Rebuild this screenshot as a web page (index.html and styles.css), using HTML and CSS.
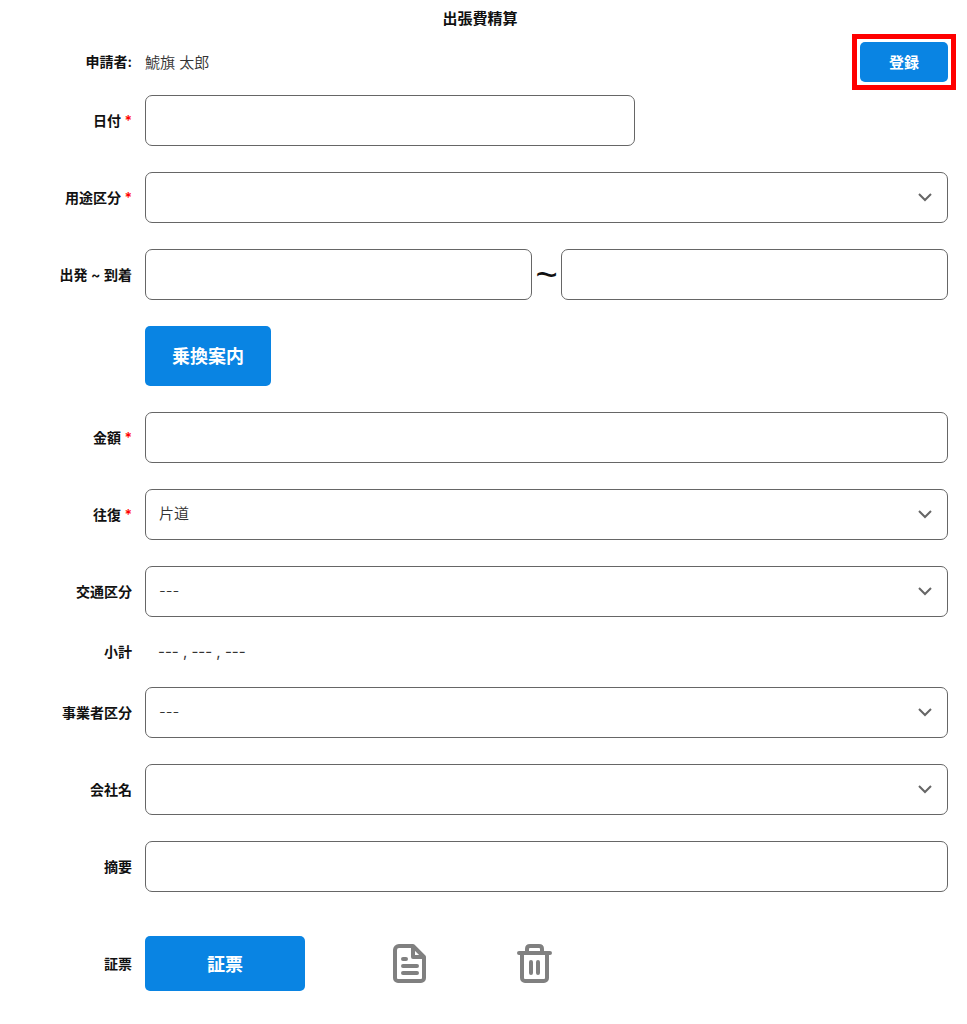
FILE: index.html
```html
<!DOCTYPE html>
<html lang="ja">
<head>
<meta charset="utf-8">
<meta name="viewport" content="width=device-width, initial-scale=1">
<title>出張費精算</title>
<link rel="stylesheet" href="styles.css">
</head>
<body>
<form class="expense">
  <h1 class="title">出張費精算</h1>
  <div class="row head">
    <span class="label">申請者:</span>
    <div class="head-body">
      <span class="name">鯱旗 太郎</span>
      <button class="button register" type="button">登録</button>
    </div>
  </div>
  <div class="row">
    <label class="label" for="date">日付 <span class="required">*</span></label>
    <input class="field date" id="date" type="text">
  </div>
  <div class="row">
    <label class="label" for="usage">用途区分 <span class="required">*</span></label>
    <div class="select">
      <select class="field" id="usage"><option></option></select>
      <svg class="chevron" viewBox="0 0 16 16" aria-hidden="true"><path d="M2 5l6 6 6-6"/></svg>
    </div>
  </div>
  <div class="row">
    <label class="label" for="from">出発 ~ 到着</label>
    <div class="range">
      <input class="field" id="from" type="text">
      <span class="tilde">~</span>
      <input class="field" id="to" type="text" aria-label="到着">
    </div>
  </div>
  <div class="row">
    <span></span>
    <button class="button transfer" type="button">乗換案内</button>
  </div>
  <div class="row">
    <label class="label" for="amount">金額 <span class="required">*</span></label>
    <input class="field" id="amount" type="text">
  </div>
  <div class="row">
    <label class="label" for="trip">往復 <span class="required">*</span></label>
    <div class="select">
      <select class="field" id="trip"><option>片道</option></select>
      <svg class="chevron" viewBox="0 0 16 16" aria-hidden="true"><path d="M2 5l6 6 6-6"/></svg>
    </div>
  </div>
  <div class="row">
    <label class="label" for="transport">交通区分</label>
    <div class="select">
      <select class="field" id="transport"><option>---</option></select>
      <svg class="chevron" viewBox="0 0 16 16" aria-hidden="true"><path d="M2 5l6 6 6-6"/></svg>
    </div>
  </div>
  <div class="row">
    <span class="label">小計</span>
    <span class="subtotal">--- , --- , ---</span>
  </div>
  <div class="row">
    <label class="label" for="operator">事業者区分</label>
    <div class="select">
      <select class="field" id="operator"><option>---</option></select>
      <svg class="chevron" viewBox="0 0 16 16" aria-hidden="true"><path d="M2 5l6 6 6-6"/></svg>
    </div>
  </div>
  <div class="row">
    <label class="label" for="company">会社名</label>
    <div class="select">
      <select class="field" id="company"><option></option></select>
      <svg class="chevron" viewBox="0 0 16 16" aria-hidden="true"><path d="M2 5l6 6 6-6"/></svg>
    </div>
  </div>
  <div class="row">
    <label class="label" for="summary">摘要</label>
    <input class="field" id="summary" type="text">
  </div>
  <div class="row voucher-row">
    <span class="label">証票</span>
    <div class="voucher-body">
      <button class="button voucher" type="button">証票</button>
      <button class="icon-button" type="button" aria-label="書類">
        <svg class="icon" viewBox="0 0 40 40" aria-hidden="true">
          <path d="M23 2H9a4 4 0 0 0-4 4v28a3 3 0 0 0 3 3h23a3 3 0 0 0 3-3V13L23 2zM23 2v11h11M13 15h3M13 22h14M13 29h14"/>
        </svg>
      </button>
      <button class="icon-button" type="button" aria-label="削除">
        <svg class="icon" viewBox="0 0 40 40" aria-hidden="true">
          <path d="M4 9h31M12 9V5Q12 2 15 2h9q3 0 3 3V9M7 10v24a3 3 0 0 0 3 3h19a3 3 0 0 0 3-3V10M16 18v11M23 18v11"/>
        </svg>
      </button>
    </div>
  </div>
</form>
</body>
</html>
```
FILE: styles.css
```css
* {
  box-sizing: border-box;
}

body {
  margin: 0;
  background: #fff;
  color: #111;
  font-family: Inter, "Noto Sans CJK JP", sans-serif;
}

.expense {
  display: flex;
  flex-direction: column;
  gap: 26px;
  padding: 8px 19px 32px 0;
}

.title {
  margin: 0 0 -18px 12px;
  font-size: 15px;
  line-height: 22px;
  font-weight: 600;
  text-align: center;
}

.row {
  display: grid;
  grid-template-columns: 132px minmax(0, 1fr);
  column-gap: 13px;
  align-items: center;
}

.head {
  margin: 4px 0 -13px;
}

.head-body {
  display: flex;
  align-items: center;
  justify-content: space-between;
}

.name {
  padding-bottom: 2px;
  color: #333;
  font-size: 15px;
  font-weight: 350;
}

.label {
  font-size: 14px;
  line-height: 18px;
  font-weight: 600;
  text-align: right;
}

.required {
  color: #f00;
}

.field {
  display: block;
  width: 100%;
  height: 51px;
  padding: 0 13px 2px;
  border: 1px solid #666;
  border-radius: 7px;
  background: #fff;
  color: #333;
  font-family: inherit;
  font-size: 15px;
  font-weight: 350;
  appearance: none;
}

.date {
  width: 61%;
}

.select {
  position: relative;
}

.chevron {
  position: absolute;
  top: 50%;
  right: 15px;
  width: 16px;
  height: 16px;
  margin-top: -9px;
  fill: none;
  stroke: #666;
  stroke-width: 2;
  pointer-events: none;
}

.range {
  display: grid;
  grid-template-columns: minmax(0, 1fr) 29px minmax(0, 1fr);
  align-items: center;
}

.tilde {
  font-family: "Liberation Sans", sans-serif;
  font-size: 38px;
  line-height: 40px;
  text-align: center;
}

.button {
  padding: 0 0 2px;
  border: 0;
  border-radius: 5px;
  background: #0984e3;
  color: #fff;
  font-family: inherit;
  font-size: 18px;
  font-weight: 600;
}

.register {
  position: relative;
  width: 88px;
  height: 40px;
  font-size: 15px;
}

.register::after {
  content: "";
  position: absolute;
  inset: -8px;
  border: 5px solid #f00;
}

.transfer {
  width: 126px;
  height: 60px;
}

.subtotal {
  padding-left: 13px;
  color: #333;
  font-size: 15px;
  line-height: 18px;
  font-weight: 400;
}

.voucher-row {
  margin-top: 18px;
}

.voucher-body {
  display: flex;
  align-items: center;
  gap: 85px;
}

.voucher {
  width: 160px;
  height: 55px;
}

.icon-button {
  padding: 0;
  border: 0;
  background: none;
}

.icon {
  display: block;
  width: 40px;
  height: 40px;
  fill: none;
  stroke: #808080;
  stroke-width: 4;
  stroke-linecap: round;
  stroke-linejoin: round;
}
```
